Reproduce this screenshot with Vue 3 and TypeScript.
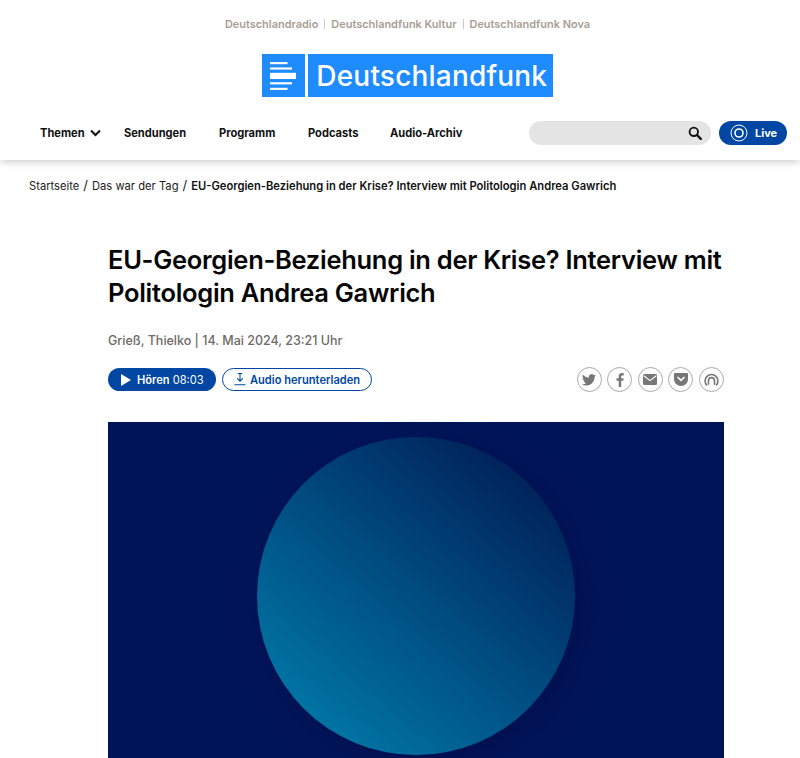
<template>
  <div class="page">
    <header class="site-header">
      <div class="station-links">
        <a v-for="(s, i) in stations" :key="s" class="station" :class="{ first: i === 0 }">{{ s }}</a>
      </div>
      <div class="logo-row">
        <div class="logo-mark">
          <svg width="26" height="28" viewBox="0 0 26 28">
            <rect x="0" y="0" width="17.500" height="2.200" fill="#fff" />
            <rect x="0" y="5.400" width="22" height="2.200" fill="#fff" />
            <rect x="0" y="10.800" width="26" height="6.200" fill="#fff" />
            <rect x="0" y="20.200" width="22" height="2.200" fill="#fff" />
            <rect x="0" y="25.800" width="17.500" height="2.200" fill="#fff" />
          </svg>
        </div>
        <div class="logo-word">Deutschlandfunk</div>
      </div>
      <nav class="nav">
        <div class="nav-links">
          <a class="nav-link themen">
            Themen
            <svg width="11" height="8" viewBox="0 0 11 8"><path d="M1 1.500l4.500 4.500L10 1.500" fill="none" stroke="#111" stroke-width="2" /></svg>
          </a>
          <a class="nav-link sendungen">Sendungen</a>
          <a class="nav-link programm">Programm</a>
          <a class="nav-link podcasts">Podcasts</a>
          <a class="nav-link">Audio-Archiv</a>
        </div>
        <div class="nav-right">
          <div class="search">
            <svg width="14" height="14" viewBox="0 0 14 14">
              <circle cx="5.800" cy="5.800" r="4.200" fill="none" stroke="#111" stroke-width="1.900" />
              <path d="M9 9l3.800 3.800" stroke="#111" stroke-width="2.400" stroke-linecap="round" />
            </svg>
          </div>
          <a class="live">
            <svg width="18" height="18" viewBox="0 0 18 18">
              <circle cx="9" cy="9" r="8" fill="none" stroke="#fff" stroke-width="1" />
              <circle cx="9" cy="9" r="4" fill="none" stroke="#fff" stroke-width="1.600" />
            </svg>
            Live
          </a>
        </div>
      </nav>
    </header>

    <div class="breadcrumb">
      <a>Startseite</a><span class="sep">/</span><a>Das war der Tag</a><span class="sep">/</span>
      <strong>EU-Georgien-Beziehung in der Krise? Interview mit Politologin Andrea Gawrich</strong>
    </div>

    <main class="article">
      <h1>EU-Georgien-Beziehung in der Krise? Interview mit Politologin Andrea Gawrich</h1>
      <p class="meta">Grieß, Thielko | 14. Mai 2024, 23:21 Uhr</p>
      <div class="actions">
        <div class="audio-btns">
          <a class="play">
            <svg width="10" height="12" viewBox="0 0 10 12"><path d="M0 0l10 6-10 6z" fill="#fff" /></svg>
            <span><b>Hören</b> 08:03</span>
          </a>
          <a class="download">
            <svg width="12" height="13" viewBox="0 0 12 13" fill="none" stroke="#0047a3" stroke-width="1.100">
              <path d="M6 0.500v7.500M3.200 5.400L6 8.200l2.800-2.800M3.800 0.500h4.400M0.500 11.800h11" />
            </svg>
            Audio herunterladen
          </a>
        </div>
        <div class="share">
          <a class="share-btn">
            <svg width="14" height="12" viewBox="0 0 24 20"><path fill="#777" d="M24 2.400a9.800 9.800 0 0 1-2.800.8A5 5 0 0 0 23.300.4a9.800 9.800 0 0 1-3.100 1.200 4.900 4.900 0 0 0-8.400 4.500A14 14 0 0 1 1.700.9a4.900 4.900 0 0 0 1.500 6.600 4.900 4.900 0 0 1-2.200-.6c0 2.400 1.700 4.400 3.900 4.900a5 5 0 0 1-2.200.1 4.900 4.900 0 0 0 4.600 3.400A9.900 9.900 0 0 1 0 17.300 14 14 0 0 0 7.500 19.500c9.100 0 14.300-7.700 14-14.600A10 10 0 0 0 24 2.400z" /></svg>
          </a>
          <a class="share-btn">
            <svg width="8" height="14" viewBox="0 0 8 14"><path fill="#777" d="M5.200 14V7.700h2.100l.3-2.500H5.200V3.700c0-.7.200-1.200 1.200-1.200h1.300V.2C7.400.1 6.700 0 5.900 0 4 0 2.700 1.100 2.700 3.300v1.900H.5v2.500h2.200V14z" /></svg>
          </a>
          <a class="share-btn">
            <svg width="14" height="11" viewBox="0 0 14 11"><rect width="14" height="11" rx="1.500" fill="#777" /><path d="M0.800 1.800L7 6.600l6.200-4.800" fill="none" stroke="#fff" stroke-width="1.200" /></svg>
          </a>
          <a class="share-btn">
            <svg width="14" height="13" viewBox="0 0 14 13"><path fill="#777" d="M1.200 0h11.600C13.500 0 14 .5 14 1.200V6c0 3.900-3.100 7-7 7s-7-3.100-7-7V1.200C0 .5.500 0 1.200 0z" /><path d="M4 4.500L7 7.300l3-2.800" fill="none" stroke="#fff" stroke-width="1.700" stroke-linecap="round" /></svg>
          </a>
          <a class="share-btn">
            <svg width="15" height="13" viewBox="0 0 14 12" fill="none" stroke="#777" stroke-width="1.500">
              <path d="M2.700 11.500A6 6 0 1 1 11.300 11.500" />
              <path d="M4.200 11V7a2.800 2.800 0 0 1 5.600 0v4" />
            </svg>
          </a>
        </div>
      </div>
      <div class="hero">
        <div class="disc"></div>
      </div>
    </main>
  </div>
</template>

<script setup lang="ts">
const stations: string[] = ['Deutschlandradio', 'Deutschlandfunk Kultur', 'Deutschlandfunk Nova'];
</script>

<style>
html, body {
  margin: 0;
  background: #fff;
  overflow: hidden;
}
</style>

<style scoped>
.page {
  width: 800px;
  height: 758px;
  overflow: hidden;
  font-family: Inter, "Liberation Sans", sans-serif;
  color: #111;
}

a {
  color: inherit;
  text-decoration: none;
}

.site-header {
  height: 160px;
  box-shadow: 0 2px 8px rgba(0, 0, 0, 0.2);
  position: relative;
}

.station-links {
  display: flex;
  justify-content: center;
  align-items: center;
  height: 14px;
  padding: 17px 0 0 15px;
  font-size: 10.950px;
  line-height: 10px;
  font-weight: 600;
  color: #a89e94;
}

.station {
  padding: 0 6px;
  border-left: 1px solid #cfc9c2;
}

.station.first {
  border-left: 0;
}

.logo-row {
  display: flex;
  justify-content: center;
  gap: 3.500px;
  margin-top: 23px;
  padding-left: 15px;
}

.logo-mark,
.logo-word {
  height: 43px;
  background: #1e8bff;
  color: #fff;
  display: flex;
  align-items: center;
}

.logo-mark {
  width: 43px;
  justify-content: center;
}

.logo-word {
  width: 245px;
  justify-content: center;
  padding-left: 2px;
  box-sizing: border-box;
  font-size: 28px;
  font-weight: 500;
  letter-spacing: 0.2px;
}

.nav {
  display: flex;
  justify-content: space-between;
  align-items: center;
  margin-top: 24px;
  padding: 0 13px 0 40px;
}

.nav-links {
  display: flex;
  font-size: 11.100px;
  font-weight: 700;
}

.nav-link {
  display: flex;
  align-items: center;
}

.themen {
  gap: 5px;
  width: 84px;
}

.sendungen {
  width: 95px;
}

.programm {
  width: 89px;
}

.podcasts {
  width: 82px;
}

.nav-right {
  display: flex;
  gap: 8px;
}

.search {
  width: 182px;
  height: 24px;
  border-radius: 12px;
  background: #e4e4e4;
  display: flex;
  align-items: center;
  justify-content: flex-end;
  padding-right: 9px;
  box-sizing: border-box;
}

.live {
  width: 68px;
  height: 24px;
  border-radius: 12px;
  background: #0047a3;
  color: #fff;
  font-size: 11px;
  font-weight: 700;
  display: flex;
  align-items: center;
  gap: 7px;
  padding-left: 11px;
  box-sizing: border-box;
}

.breadcrumb {
  padding: 18px 0 0 29px;
  font-size: 11.200px;
  line-height: 15px;
  color: #222;
}

.sep {
  margin: 0 4px;
  font-size: 13px;
}

.breadcrumb strong {
  font-weight: 600;
  color: #111;
}

.article {
  width: 616px;
  margin-left: 108px;
  padding-top: 49px;
}

h1 {
  margin: 0;
  font-size: 25.500px;
  line-height: 33px;
  letter-spacing: -0.290px;
  font-weight: 600;
  color: #060606;
}

.meta {
  margin: 24px 0 0;
  font-size: 12.500px;
  line-height: 16px;
  font-weight: 500;
  color: #6e6a65;
}

.actions {
  display: flex;
  justify-content: space-between;
  align-items: center;
  margin-top: 18px;
}

.audio-btns {
  display: flex;
  gap: 6px;
}

.play,
.download {
  height: 23px;
  border-radius: 12px;
  font-size: 11.100px;
  display: flex;
  align-items: center;
  box-sizing: border-box;
}

.play {
  width: 108px;
  background: #0047a3;
  color: #fff;
  gap: 6px;
  padding-left: 13px;
}

.play b {
  font-weight: 600;
}

.download {
  width: 150px;
  border: 1px solid #0047a3;
  color: #0047a3;
  font-weight: 600;
  gap: 4px;
  padding-left: 11px;
}

.share {
  display: flex;
  gap: 5.600px;
}

.share-btn {
  width: 25px;
  height: 25px;
  border: 1px solid #aaa;
  border-radius: 50%;
  display: flex;
  align-items: center;
  justify-content: center;
  box-sizing: border-box;
}

.hero {
  position: relative;
  height: 346px;
  margin-top: 30px;
  background: #001558;
}

.disc {
  position: absolute;
  left: 149px;
  top: 15px;
  width: 318px;
  height: 318px;
  border-radius: 50%;
  background: linear-gradient(40deg, #0073a2 15%, #004c80 50%, #00245c 85%);
  box-shadow: 8px 8px 30px rgba(0, 10, 70, 0.35);
}
</style>
